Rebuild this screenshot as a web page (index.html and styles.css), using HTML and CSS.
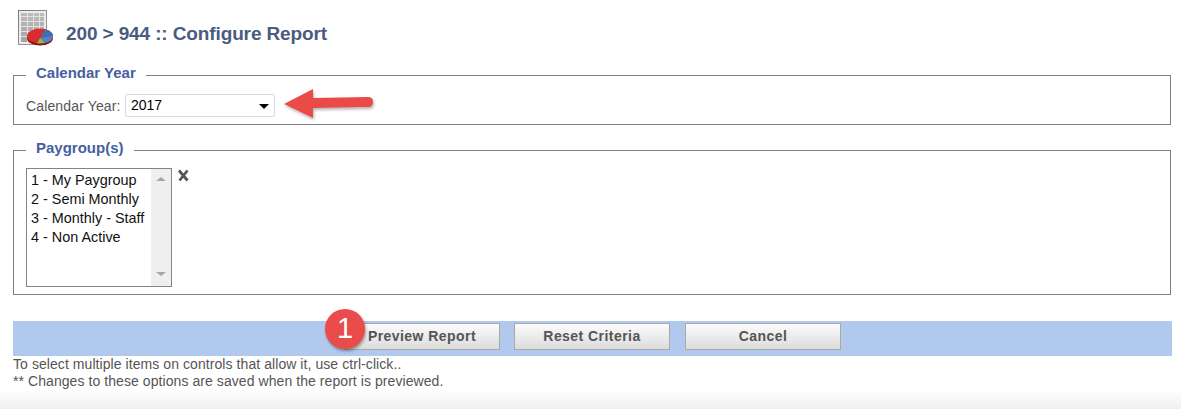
FILE: index.html
```html
<!DOCTYPE html>
<html lang="en">
<head>
<meta charset="utf-8">
<title>Configure Report</title>
<link rel="stylesheet" href="styles.css">
</head>
<body>
<div class="page">
  <header class="head">
    <svg class="report-icon" width="36" height="36" viewBox="0 0 36 36">
      <defs>
        <linearGradient id="sheet" x1="0" y1="0" x2="0" y2="1"><stop offset="0" stop-color="#bdbdbd"/><stop offset="1" stop-color="#a4a4a4"/></linearGradient>
        <linearGradient id="edge" x1="0" y1="0" x2="1" y2="1"><stop offset="0" stop-color="#777"/><stop offset="1" stop-color="#a5a5a5"/></linearGradient>
      </defs>
      <rect x="0.5" y="0.5" width="28" height="34" fill="#ececec" stroke="url(#edge)"/>
      <rect x="3" y="3" width="23" height="29" fill="url(#sheet)"/>
      <path d="M3 6.5h23M3 11.5h23M3 16.5h23M3 21.5h23M3 26.5h23M9.500 3v29M15.500 3v29M21.500 3v29" stroke="#e2e2e2" stroke-width="1" fill="none"/>
      <ellipse cx="22" cy="28" rx="13" ry="7.500" fill="#8c1414"/>
      <ellipse cx="22" cy="26" rx="13" ry="7.500" fill="#d92c2c"/>
      <path d="M22 28 L27 19.500 A12 7 0 0 1 35 26 Z" fill="#3c6fb2"/>
      <path d="M22 28 L35 26 A12 7 0 0 1 27 33 Z" fill="#4f86c6"/>
      <path d="M22 28 L27 33 L19 33.500 Z" fill="#8fbf3f"/>
    </svg>
    <h1 class="title">200 &gt; 944 :: Configure Report</h1>
  </header>

  <fieldset class="group group-year">
    <legend class="legend">Calendar Year</legend>
    <div class="year-row">
      <span class="label">Calendar Year:</span>
      <div class="select"><span>2017</span><i class="caret"></i></div>
    </div>
    <svg class="arrow" width="96" height="42" viewBox="0 0 96 42">
      <defs><filter id="ds" x="-10%" y="-20%" width="125%" height="150%"><feDropShadow dx="1" dy="2" stdDeviation="1.5" flood-color="#000" flood-opacity="0.3"/></filter></defs>
      <path d="M2 18 L31 3 L31 12 L86 11 Q91 11 91 16 Q91 21 86 21 L31 22 L31 32 Z" fill="#ea4b47" filter="url(#ds)"/>
    </svg>
  </fieldset>

  <fieldset class="group group-pay">
    <legend class="legend">Paygroup(s)</legend>
    <div class="pay-row">
      <div class="listbox">
        <ul class="options">
          <li>1 - My Paygroup</li>
          <li>2 - Semi Monthly</li>
          <li>3 - Monthly - Staff</li>
          <li>4 - Non Active</li>
        </ul>
        <div class="scroll"><i class="up"></i><i class="down"></i></div>
      </div>
      <svg class="clear" width="13" height="13" viewBox="0 0 13 13">
        <path d="M2 1.500 L10.500 11.500 M10.500 1.500 L2.500 11.500" stroke="#555" stroke-width="2.800" fill="none"/>
      </svg>
    </div>
  </fieldset>

  <div class="bar">
    <button class="btn">Preview Report</button>
    <button class="btn">Reset Criteria</button>
    <button class="btn btn-last">Cancel</button>
    <span class="badge">1</span>
  </div>
  <p class="note">To select multiple items on controls that allow it, use ctrl-click..</p>
  <p class="note">** Changes to these options are saved when the report is previewed.</p>
</div>
<div class="fade"></div>
</body>
</html>
```
FILE: styles.css
```css
* { box-sizing: border-box; }
html, body { margin: 0; padding: 0; background: #fff; height: 409px; overflow: hidden; }
body { font-family: "Liberation Sans", Arial, sans-serif; position: relative; }
.page { padding: 10px 9px 0 13px; position: relative; z-index: 1; }
.head { display: flex; align-items: flex-end; height: 36px; padding-left: 5px; }
.report-icon { display: block; flex: none; }
.title { margin: 0 0 1px 12px; font-size: 19px; line-height: 22px; font-weight: bold; color: #4a5b80; letter-spacing: -.12px; }
.group { margin: 0 1px 0 0; padding: 0 12px; border: 1px solid #7f7f7f; position: relative; min-width: 0; }
.legend { padding: 0 10px 5px; font-size: 15px; line-height: 15px; font-weight: bold; color: #46609f; }
.group-year { margin-top: 19px; height: 60px; }
.year-row { display: flex; align-items: center; height: 23px; margin-top: 9px; }
.label { font-size: 14px; color: #555; width: 99px; flex: none; letter-spacing: .14px; }
.select { position: relative; width: 150px; height: 23px; border: 1px solid #d5dbe6; border-radius: 2px; font-size: 14px; color: #000; padding: 0 0 0 5px; line-height: 21px; background: #fff; }
.caret { position: absolute; right: 5px; top: 9px; border: 5px solid transparent; border-top: 5px solid #000; border-bottom: 0; width: 0; height: 0; }
.arrow { position: absolute; left: 268px; top: 1px; }
.group-pay { margin-top: 15px; height: 155px; }
.pay-row { display: flex; align-items: flex-start; margin-top: 8px; }
.listbox { display: flex; width: 146px; height: 119px; border: 1px solid #7f8590; background: #fff; flex: none; }
.options { list-style: none; margin: 0; padding: 2px 0 0 4px; flex: 1; font-size: 14.4px; line-height: 19px; color: #111; white-space: nowrap; overflow: hidden; }
.scroll { position: relative; width: 20px; flex: none; background: #efefef; }
.scroll i { position: absolute; left: 5px; width: 0; height: 0; border: 5px solid transparent; }
.up { top: 8px; border-top: 0 !important; border-bottom: 4px solid #a6a6a6 !important; }
.down { bottom: 10px; border-bottom: 0 !important; border-top: 4px solid #a6a6a6 !important; }
.clear { margin: 1px 0 0 5px; display: block; flex: none; }
.bar { position: relative; margin-top: 26px; height: 35px; background: #b0c9ed; display: flex; align-items: flex-start; gap: 14px; padding: 2px 0 0 331px; }
.btn { width: 156px; height: 27px; padding: 0; border: 1px solid #a9a9a9; background: linear-gradient(#fbfbfb, #dcdcdc); font: bold 14px/25px "Liberation Sans", Arial, sans-serif; color: #555; letter-spacing: .45px; }
.btn-last { margin-left: 1px; }
.badge { position: absolute; left: 312px; top: -12px; width: 40px; height: 40px; border-radius: 50%; background: #ea4b4b; color: #fff; font-size: 29px; line-height: 38px; text-align: center; box-shadow: 1px 2px 3px rgba(0,0,0,.35); }
.note { margin: 0; font-size: 14px; line-height: 17px; color: #555; letter-spacing: .07px; }
.fade { position: absolute; left: 0; right: 0; bottom: 0; height: 20px; background: linear-gradient(#fff, #eef0f3); }
```
